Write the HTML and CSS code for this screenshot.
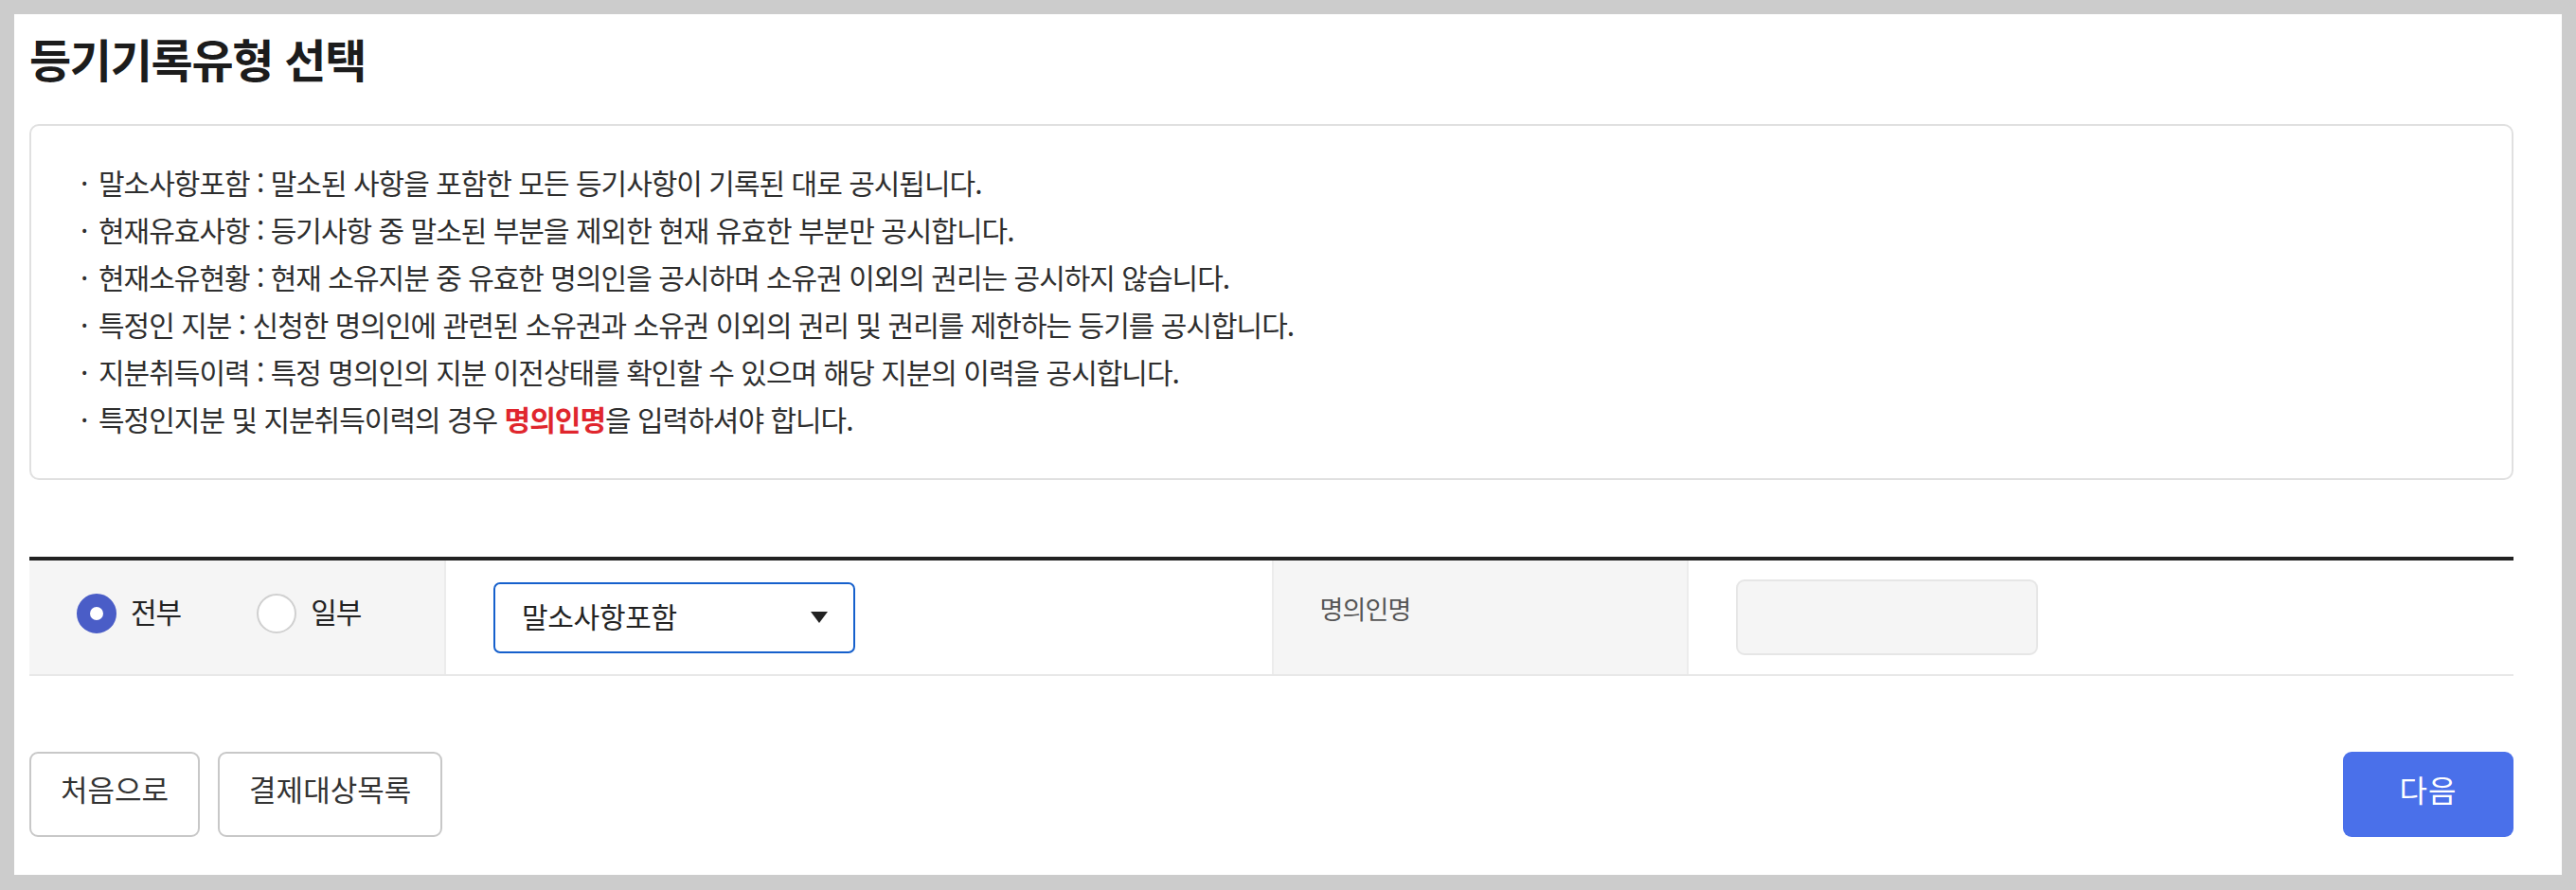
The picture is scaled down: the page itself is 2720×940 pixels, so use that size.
FILE: index.html
```html
<!DOCTYPE html>
<html lang="ko">
<head>
<meta charset="utf-8">
<title>등기기록유형 선택</title>
<link rel="stylesheet" href="styles.css">
</head>
<body>
<div class="page">
  <h1 class="title">등기기록유형 선택</h1>

  <div class="info-box">
    <ul class="info-list">
      <li>말소사항포함 : 말소된 사항을 포함한 모든 등기사항이 기록된 대로 공시됩니다.</li>
      <li>현재유효사항 : 등기사항 중 말소된 부분을 제외한 현재 유효한 부분만 공시합니다.</li>
      <li>현재소유현황 : 현재 소유지분 중 유효한 명의인을 공시하며 소유권 이외의 권리는 공시하지 않습니다.</li>
      <li>특정인 지분 : 신청한 명의인에 관련된 소유권과 소유권 이외의 권리 및 권리를 제한하는 등기를 공시합니다.</li>
      <li>지분취득이력 : 특정 명의인의 지분 이전상태를 확인할 수 있으며 해당 지분의 이력을 공시합니다.</li>
      <li>특정인지분 및 지분취득이력의 경우 <strong class="em-red">명의인명</strong>을 입력하셔야 합니다.</li>
    </ul>
  </div>

  <div class="form-table">
    <div class="cell cell-head cell-first">
      <label class="radio">
        <span class="radio-dot checked"></span>
        <span class="radio-label">전부</span>
      </label>
      <label class="radio">
        <span class="radio-dot"></span>
        <span class="radio-label">일부</span>
      </label>
    </div>
    <div class="cell cell-body">
      <div class="select">
        <span class="select-text">말소사항포함</span>
        <span class="select-arrow"></span>
      </div>
    </div>
    <div class="cell cell-head cell-mid">
      <span class="field-label">명의인명</span>
    </div>
    <div class="cell cell-body">
      <div class="text-input"></div>
    </div>
  </div>

  <div class="actions">
    <div class="actions-left">
      <button class="btn btn-line" type="button">처음으로</button>
      <button class="btn btn-line" type="button">결제대상목록</button>
    </div>
    <button class="btn btn-primary" type="button">다음</button>
  </div>
</div>
</body>
</html>
```

FILE: styles.css
```css
* {
  box-sizing: border-box;
}

html, body {
  margin: 0;
  padding: 0;
  background: #cccccc;
}

body {
  font-family: "Noto Sans CJK KR", "Noto Sans", sans-serif;
  color: #333333;
}

.page {
  margin: 15px 15px 16px 15px;
  background: #ffffff;
  padding: 16px 51px 40px 16px;
}

.title {
  margin: 0;
  font-size: 48px;
  line-height: 60px;
  font-weight: 700;
  letter-spacing: -1.3px;
  color: #1c1c1c;
}

.info-box {
  margin-top: 40px;
  border: 2px solid #e0e0e0;
  border-radius: 10px;
  padding: 34px 40px 38px 52px;
}

.info-list {
  list-style: none;
  margin: 0;
  padding: 0;
}

.info-list li {
  font-size: 30px;
  line-height: 50px;
  letter-spacing: -1px;
  color: #2e2e2e;
}

.info-list li::before {
  content: "·";
  display: inline-block;
  width: 19px;
  letter-spacing: 0;
}

.em-red {
  color: #e0262d;
  font-weight: 700;
}

.form-table {
  margin-top: 81px;
  border-top: 4px solid #222222;
  border-bottom: 2px solid #e8e8e8;
  display: grid;
  grid-template-columns: 440px 1fr 440px 1fr;
  height: 126px;
}

.cell {
  display: flex;
  align-items: center;
  padding-left: 50px;
}

.cell-head {
  background: #f5f5f5;
}

.cell-first {
  border-right: 2px solid #ececec;
  padding-bottom: 8px;
}

.cell-mid {
  border-left: 2px solid #ececec;
  border-right: 2px solid #ececec;
  padding-left: 49px;
  padding-bottom: 20px;
}

.radio {
  display: flex;
  align-items: center;
  margin-right: 80px;
}

.radio-dot {
  width: 42px;
  height: 42px;
  border-radius: 50%;
  border: 2px solid #d0d0d0;
  background: #ffffff;
}

.radio-dot.checked {
  border: 14px solid #4a5dc7;
}

.radio-label {
  margin-left: 15px;
  padding-bottom: 7px;
  font-size: 30px;
  letter-spacing: -1px;
  color: #222222;
}

.select {
  width: 382px;
  height: 75px;
  border: 2px solid #1660cc;
  border-radius: 7px;
  display: flex;
  align-items: center;
  justify-content: space-between;
  padding: 0 27px 0 28px;
}

.select-text {
  padding-bottom: 4px;
  font-size: 30px;
  letter-spacing: -0.3px;
  color: #222222;
}

.select-arrow {
  width: 0;
  height: 0;
  border-left: 9px solid transparent;
  border-right: 9px solid transparent;
  border-top: 12px solid #222222;
}

.field-label {
  font-size: 27px;
  letter-spacing: -0.8px;
  color: #555555;
}

.text-input {
  width: 319px;
  height: 80px;
  background: #f5f5f5;
  border: 2px solid #e6e6e6;
  border-radius: 9px;
}

.actions {
  margin-top: 80px;
  display: flex;
  justify-content: space-between;
  align-items: center;
}

.actions-left {
  display: flex;
  gap: 19px;
}

.btn {
  font-family: "Noto Sans CJK KR", "Noto Sans", sans-serif;
  height: 90px;
  border-radius: 9px;
  font-size: 31px;
  letter-spacing: 0;
  padding: 0 31px 13px;
  cursor: pointer;
}

.btn-line {
  background: #ffffff;
  border: 2px solid #c8c8c8;
  color: #333333;
}

.btn-primary {
  width: 180px;
  background: #4a70ea;
  border: none;
  color: #ffffff;
  font-size: 32px;
  letter-spacing: 1px;
}
```
